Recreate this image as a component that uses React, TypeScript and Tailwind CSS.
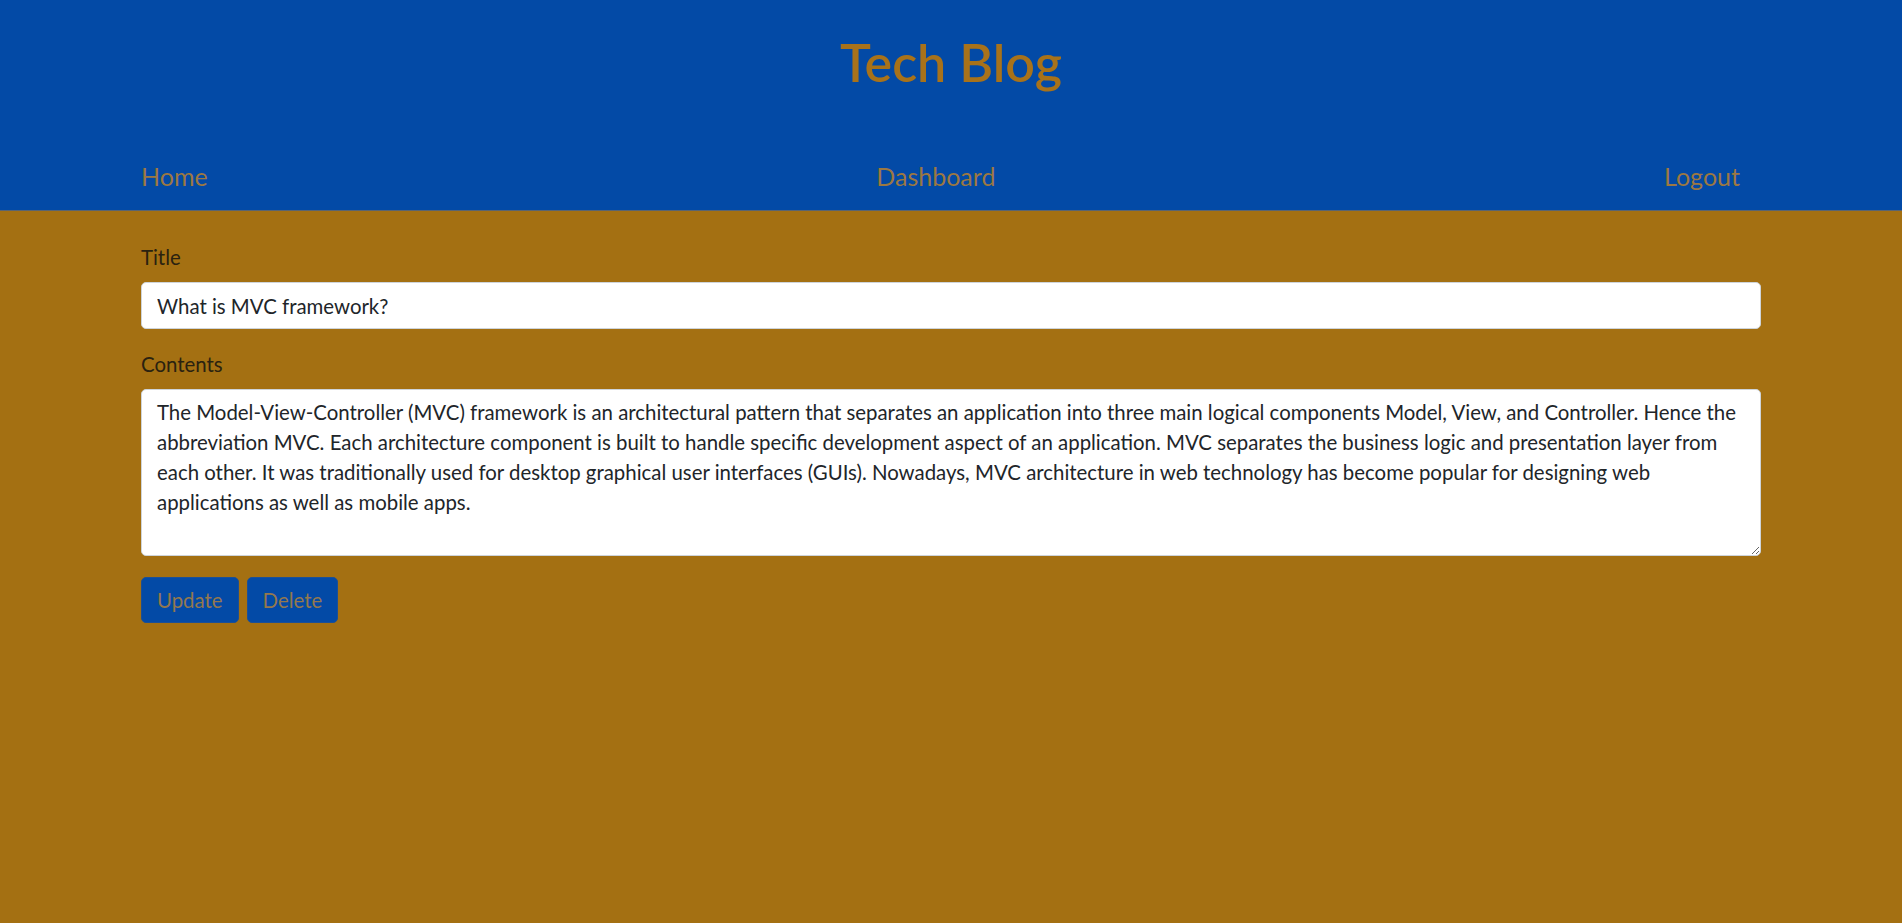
import React from "react";

const body =
  "The Model-View-Controller (MVC) framework is an architectural pattern that separates an application into three main logical components Model, View, and Controller. Hence the abbreviation MVC. Each architecture component is built to handle specific development aspect of an application. MVC separates the business logic and presentation layer from each other. It was traditionally used for desktop graphical user interfaces (GUIs). Nowadays, MVC architecture in web technology has become popular for designing web applications as well as mobile apps.";

const App = () => {
  return (
    <div className="min-h-screen bg-[#a47012] font-['Lato',sans-serif]">
      <header className="h-[211px] bg-[#034aa6] border-b border-[#5a6470]">
        <h1 className="pt-[31px] text-center text-[52px] leading-[1.2] font-semibold text-[#a8721a]">
          Tech Blog
        </h1>
        <nav className="w-[1620px] mx-auto mt-[68px] flex justify-between text-[25px] leading-[1.2] text-[#9c7842]">
          <a className="pr-[21px]">Home</a>
          <a className="pr-[21px]">Dashboard</a>
          <a className="pr-[21px]">Logout</a>
        </nav>
      </header>

      <main className="w-[1620px] mx-auto pt-[31px] text-[20.4px] leading-[30px] text-[#212529]">
        <div className="mb-[20px]">
          <label className="block mb-[10px] text-[#2a2210]">Title</label>
          <input
            className="block w-full h-[47px] px-[15px] py-[7px] bg-white border border-[#ced4da] rounded-[5px] text-[#212529] outline-none"
            defaultValue="What is MVC framework?"
          />
        </div>
        <div className="mb-[21px]">
          <label className="block mb-[10px] text-[#2a2210]">Contents</label>
          <textarea
            rows={5}
            className="block w-full h-[167px] px-[15px] py-[7px] bg-white border border-[#ced4da] rounded-[5px] text-[#212529] outline-none"
            defaultValue={body}
          />
        </div>
        <div className="flex gap-[8px]">
          <button className="h-[46px] px-[15px] bg-[#034aa6] border border-[#1b4f96] rounded-[5px] text-[#94784e]">
            Update
          </button>
          <button className="h-[46px] px-[15px] bg-[#034aa6] border border-[#1b4f96] rounded-[5px] text-[#94784e]">
            Delete
          </button>
        </div>
      </main>
    </div>
  );
};

export default App;
